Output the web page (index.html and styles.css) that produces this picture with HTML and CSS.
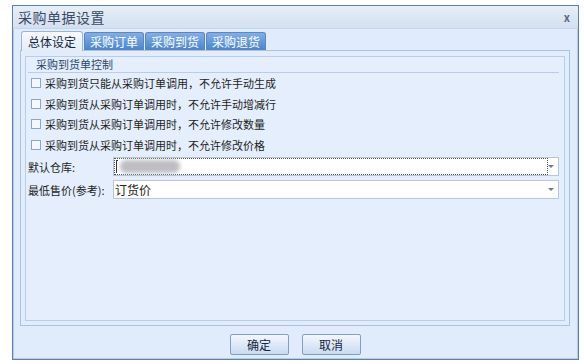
FILE: index.html
```html
<!DOCTYPE html>
<html lang="zh-CN">
<head>
    <meta charset="UTF-8">
    <title>采购单据设置</title>
    <link rel="stylesheet" href="styles.css">
</head>
<body>

<div class="window">
    <div class="titlebar">
        <span class="title">采购单据设置</span>
        <span class="close">x</span>
    </div>
    <div class="body">
        <div class="tabs">
            <div class="tab active">总体设定</div>
            <div class="tab">采购订单</div>
            <div class="tab">采购到货</div>
            <div class="tab">采购退货</div>
        </div>
        <div class="panel">
            <div class="group">
                <div class="group-title">采购到货单控制</div>
                <label class="check"><span class="box"></span>采购到货只能从采购订单调用，不允许手动生成</label>
                <label class="check"><span class="box"></span>采购到货从采购订单调用时，不允许手动增减行</label>
                <label class="check"><span class="box"></span>采购到货从采购订单调用时，不允许修改数量</label>
                <label class="check"><span class="box"></span>采购到货从采购订单调用时，不允许修改价格</label>

                <div class="row">
                    <span class="label">默认仓库:</span>
                    <div class="combo focus">
                        <span class="value"><span class="caret"></span><span class="blur"></span></span>
                        <span class="arrow"></span>
                    </div>
                </div>
                <div class="row">
                    <span class="label">最低售价(参考):</span>
                    <div class="combo">
                        <span class="value">订货价</span>
                        <span class="arrow"></span>
                    </div>
                </div>
            </div>
        </div>
        <div class="buttons">
            <button>确定</button>
            <button>取消</button>
        </div>
    </div>
</div>

</body>
</html>
```

FILE: styles.css
```css
* {
    box-sizing: border-box;
}
body {
    margin: 0;
    background-color: #ffffff;
    font-family: "Noto Sans CJK SC", "DejaVu Sans", sans-serif;
    font-size: 11px;
    color: #222;
}
.window {
    margin: 5px 0 0 12px;
    width: 567px;
    height: 355px;
    border: 1px solid #5d7fa8;
    background-color: #dfe8f6;
    display: flex;
    flex-direction: column;
}
.titlebar {
    height: 23px;
    display: flex;
    align-items: center;
    justify-content: space-between;
    padding: 0 8px 0 5px;
    background: linear-gradient(#e6eef8, #d3e0f1);
    border-bottom: 1px solid #c6d6ec;
}
.title {
    font-size: 14px;
    color: #3c4b63;
    letter-spacing: 0.5px;
}
.close {
    font-size: 11px;
    font-weight: bold;
    color: #5b6b80;
}
.body {
    flex: 1;
    display: flex;
    flex-direction: column;
    padding: 1px 7px 0 6px;
    border-left: 1px solid #b7cbe6;
    border-right: 1px solid #b7cbe6;
    border-bottom: 1px solid #b7cbe6;
    background-color: #e0ebfb;
}
.tabs {
    display: flex;
    gap: 1px;
    padding-left: 1px;
    height: 20px;
    align-items: flex-end;
}
.tab {
    width: 60px;
    height: 18px;
    line-height: 17px;
    text-align: center;
    font-size: 12px;
    color: #ffffff;
    border: 1px solid #5b86bf;
    border-bottom: none;
    border-radius: 3px 3px 0 0;
    background: linear-gradient(#80afe8, #4c84cc);
}
.tab.active {
    width: 62px;
    height: 20px;
    line-height: 20px;
    color: #15263f;
    border-color: #99b6da;
    background: linear-gradient(#f6f9fd, #e3edf9);
    position: relative;
    top: 1px;
}
.panel {
    height: 276px;
    border: 1px solid #a9c2e2;
    background-color: #e2ecfa;
    padding: 5px 4px 4px 4px;
}
.group {
    height: 100%;
    border: 1px solid #b8cde9;
    background-color: #e4eefc;
    padding: 0 5px 0 2px;
}
.group-title {
    height: 16px;
    line-height: 15px;
    padding-left: 8px;
    color: #29476d;
    border-bottom: 1px solid #b8cde9;
    margin-bottom: 0;
}
.check {
    display: flex;
    align-items: center;
    height: 20.5px;
    color: #1e1e1e;
    padding-left: 3px;
}
.box {
    width: 10px;
    height: 10px;
    border: 1px solid #8aa6c9;
    background-color: #f4f8fd;
    margin-right: 4px;
}
.row {
    display: flex;
    align-items: center;
    height: 23px;
}
.label {
    width: 85px;
    white-space: nowrap;
    color: #1e1e1e;
}
.combo {
    width: 446px;
    height: 19px;
    border: 1px solid #b7c7db;
    background-color: #ffffff;
    display: flex;
    align-items: center;
    justify-content: space-between;
}
.combo.focus .value {
    outline: 1px dotted #555;
    outline-offset: -1px;
    width: 434px;
}
.value {
    height: 17px;
    line-height: 17px;
    padding-left: 1px;
    display: flex;
    align-items: center;
    font-size: 12px;
}
.caret {
    width: 2px;
    height: 13px;
    border-left: 1px solid #333;
    border-top: 1px solid #333;
    margin: 0 2px 0 1px;
}
.blur {
    width: 60px;
    height: 13px;
    background-color: #bdbdc2;
    border-radius: 6px;
    filter: blur(2px);
}
.arrow {
    width: 0;
    height: 0;
    margin-right: 4px;
    border-left: 3px solid transparent;
    border-right: 3px solid transparent;
    border-top: 3px solid #6b7c92;
}
.buttons {
    display: flex;
    justify-content: center;
    gap: 13px;
    padding: 8px 0 0 0;
}
button {
    width: 59px;
    height: 21px;
    font-family: "Noto Sans CJK SC", sans-serif;
    font-size: 12px;
    color: #15263f;
    border: 1px solid #7f9fc6;
    border-radius: 2px;
    background: linear-gradient(#f3f7fc, #c9dbf2);
    padding: 0;
}
```
